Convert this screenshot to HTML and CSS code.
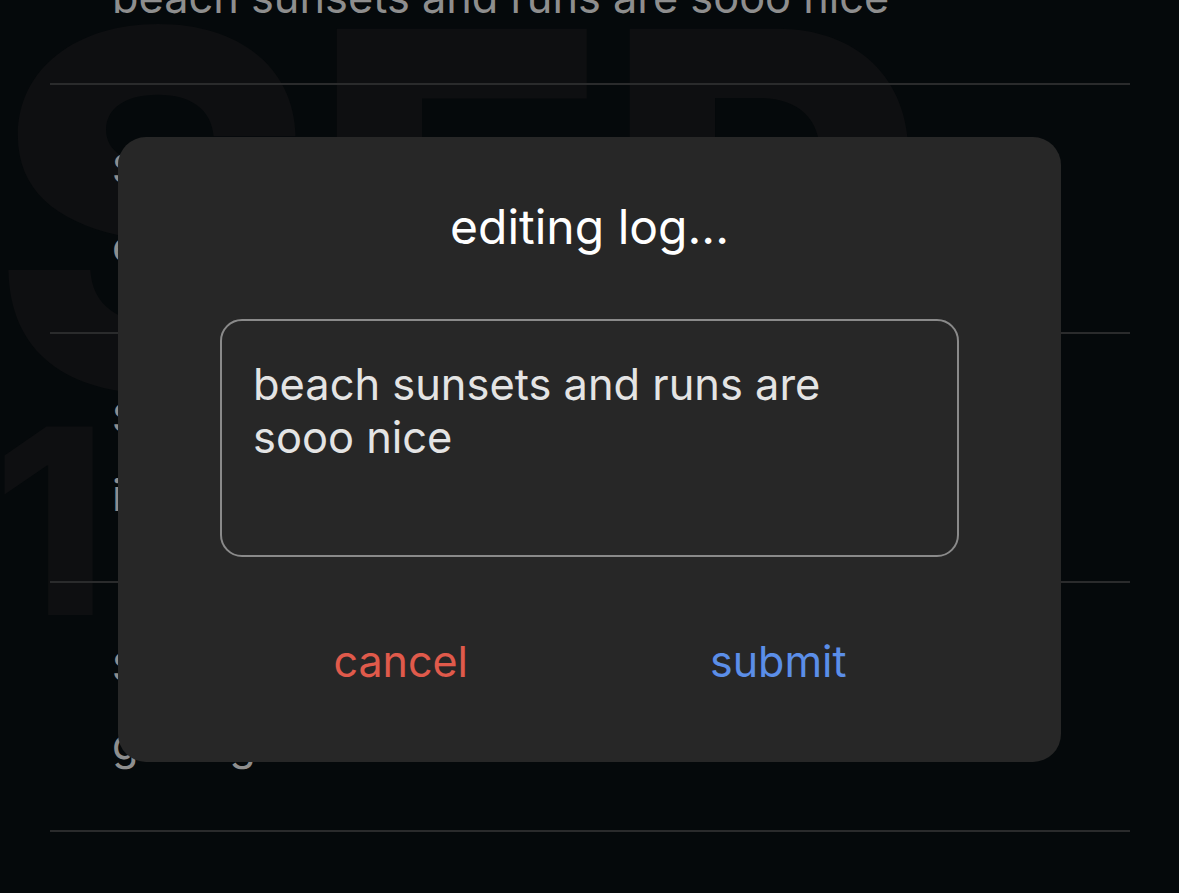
FILE: index.html
```html
<!DOCTYPE html>
<html lang="en">
<head>
<meta charset="utf-8">
<title>editing log</title>
<link rel="stylesheet" href="styles.css">
</head>
<body>
<div class="page">
  <div class="watermark" aria-hidden="true">
    <div class="wm-month">SEP</div>
    <div class="wm-day">14</div>
  </div>

  <ul class="log-list">
    <li class="log-row">
      <div class="log-date">Sep 18, 2023</div>
      <div class="log-text">beach sunsets and runs are sooo nice</div>
    </li>
    <li class="log-row">
      <div class="log-date">Sep 17, 2023</div>
      <div class="log-text">evening walk by the pier</div>
    </li>
    <li class="log-row">
      <div class="log-date">Sep 16, 2023</div>
      <div class="log-text">it rained all afternoon</div>
    </li>
    <li class="log-row">
      <div class="log-date">Sep 15, 2023</div>
      <div class="log-text">good game</div>
    </li>
  </ul>

  <div class="overlay">
    <div class="dialog" role="dialog" aria-label="editing log">
      <h2 class="dialog-title">editing log...</h2>
      <textarea class="dialog-input" spellcheck="false">beach sunsets and runs are sooo nice</textarea>
      <div class="dialog-actions">
        <button class="action action-cancel" type="button">cancel</button>
        <button class="action action-submit" type="button">submit</button>
      </div>
    </div>
  </div>
</div>
</body>
</html>
```

FILE: styles.css
```css
* {
  box-sizing: border-box;
}

html, body {
  margin: 0;
  padding: 0;
  background: #05090b;
}

body {
  font-family: Inter, "Noto Sans", sans-serif;
}

.page {
  position: relative;
  width: 1179px;
  height: 893px;
  overflow: hidden;
  background: #05090b;
}

/* faint date watermark behind the list */
.watermark {
  position: absolute;
  left: -9px;
  top: -39px;
  color: #0e0f11;
  font-family: Inter, sans-serif;
  font-weight: 800;
  line-height: 1;
  pointer-events: none;
  z-index: 0;
}

.wm-month {
  font-size: 495px;
  height: 430px;
  letter-spacing: -9px;
}

.wm-day {
  font-size: 259px;
  letter-spacing: 60px;
  margin-left: 2px;
}

.log-list {
  position: relative;
  z-index: 1;
  list-style: none;
  margin: -164px 49px 0 50px;
  padding: 0;
}

.log-row {
  height: 249px;
  border-bottom: 2px solid #2a2b2c;
  padding: 60px 0 0 62px;
  color: #8e8e8e;
}

.log-date {
  font-size: 40px;
  line-height: 48px;
  white-space: nowrap;
}

.log-text {
  margin-top: 29px;
  font-size: 43.3px;
  line-height: 48px;
  white-space: nowrap;
}

.overlay {
  position: absolute;
  inset: 0;
  z-index: 2;
  display: flex;
  align-items: center;
  justify-content: center;
  padding-top: 6px;
}

.dialog {
  width: 943px;
  background: #272727;
  border-radius: 28px;
  padding: 60px 102px 75px;
  display: flex;
  flex-direction: column;
}

.dialog-title {
  margin: 0;
  font-size: 48px;
  line-height: 60px;
  font-weight: 400;
  color: #ffffff;
  text-align: center;
}

.dialog-input {
  display: block;
  margin-top: 62px;
  width: 100%;
  height: 238px;
  border: 2px solid #8a8a8a;
  border-radius: 22px;
  background: transparent;
  color: #e4e4e4;
  font-family: Inter, sans-serif;
  font-size: 43.4px;
  line-height: 53px;
  padding: 37px 31px 0;
  resize: none;
  outline: none;
  overflow: hidden;
}

.dialog-actions {
  margin: 78px -8px 0;
  display: flex;
}

.action {
  flex: 1;
  background: none;
  border: 0;
  padding: 0;
  font-family: Inter, sans-serif;
  font-size: 43px;
  line-height: 52px;
  cursor: pointer;
}

.action-cancel {
  color: #e05a4b;
}

.action-submit {
  color: #5b8ee8;
}
```
